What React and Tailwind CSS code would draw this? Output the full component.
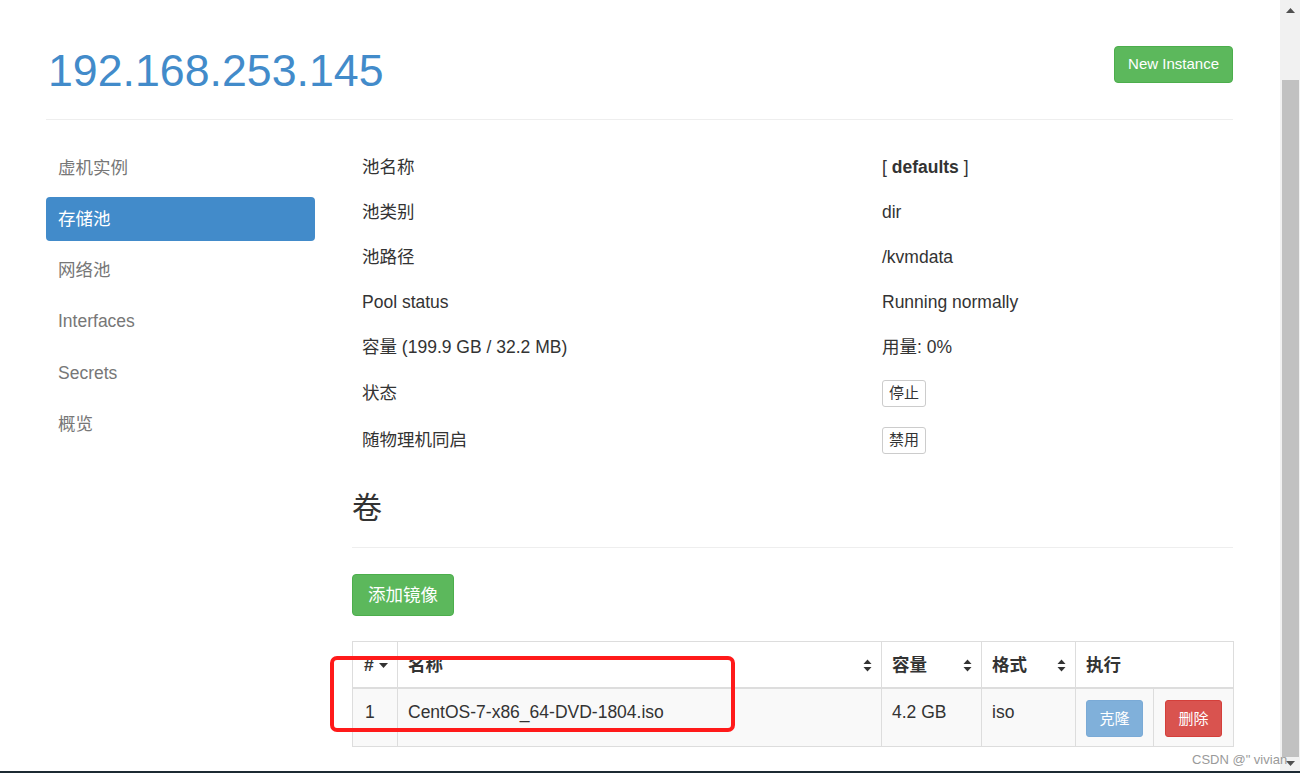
import React from 'react'

const navItems = ['虚机实例', '存储池', '网络池', 'Interfaces', 'Secrets', '概览'];

const infoRows = [
  { label: '池名称', value: <span>[ <b>defaults</b> ]</span> },
  { label: '池类别', value: 'dir' },
  { label: '池路径', value: '/kvmdata' },
  { label: 'Pool status', value: 'Running normally' },
  { label: '容量 (199.9 GB / 32.2 MB)', value: '用量: 0%' },
  { label: '状态', value: 'btn:停止', tall: true },
  { label: '随物理机同启', value: 'btn:禁用', tall: true },
];

const SortIcon = () => (
  <svg width="9" height="13" viewBox="0 0 9 13" className="shrink-0">
    <path d="M4.5 0.5 L8.5 5 L0.5 5 Z" fill="#333" />
    <path d="M0.5 8 L8.5 8 L4.5 12.5 Z" fill="#333" />
  </svg>
);

const Caret = () => (
  <svg width="9" height="5" viewBox="0 0 9 5">
    <path d="M0 0 L9 0 L4.5 5 Z" fill="#333" />
  </svg>
);

const SmallBtn = ({ children }) => (
  <span className="inline-flex items-center justify-center h-[27px] px-[6px] border border-[#ccc] rounded-[3px] bg-white text-[15px] text-[#333]">
    {children}
  </span>
);

export default function App() {
  const th = 'border-t border-l border-r border-[#ddd] border-b-2 border-b-[#ddd] px-[10px] pt-[11px] pb-[9px] text-left font-bold leading-[25px]';
  const td = 'border border-[#ddd] px-[10px] pt-[11px] pb-[9px] align-top leading-[25px] bg-[#f9f9f9]';

  return (
    <div className="relative h-[773px] w-[1300px] overflow-hidden bg-white font-['Liberation_Sans','Noto_Sans_CJK_SC',sans-serif] text-[17.5px] text-[#333]">
      <div className="flex h-[771px]">
        <div className="flex-1 pl-[46px]">
          <div className="w-[1187px]">
            {/* header */}
            <div className="flex items-start justify-between pt-[46px] pb-[23px] border-b border-[#eee]">
              <h1 className="text-[44.7px] leading-[50px] text-[#428bca] pl-[2px]">192.168.253.145</h1>
              <button className="h-[37px] px-[13px] rounded-[4px] bg-[#5cb85c] border border-[#4cae4c] text-white text-[15px]">
                New Instance
              </button>
            </div>

            <div className="flex mt-[25px]">
              {/* sidebar */}
              <div className="w-[269px] flex flex-col gap-[7.2px] pt-[1px]">
                {navItems.map((item) => (
                  <div
                    key={item}
                    className={`h-[44px] flex items-center px-[12px] rounded-[4px] ${item === '存储池' ? 'bg-[#428bca] text-white' : 'text-[#777]'}`}
                  >
                    {item}
                  </div>
                ))}
              </div>

              {/* content */}
              <div className="ml-[37px] w-[881px]">
                <div className="grid grid-cols-[520px_1fr]">
                  {infoRows.map((row) => (
                    <React.Fragment key={row.label}>
                      <div className={`${row.tall ? 'h-[47px]' : 'h-[45px]'} flex items-center px-[10px]`}>{row.label}</div>
                      <div className={`${row.tall ? 'h-[47px]' : 'h-[45px]'} flex items-center px-[10px]`}>
                        {typeof row.value === 'string' && row.value.startsWith('btn:') ? (
                          <SmallBtn>{row.value.slice(4)}</SmallBtn>
                        ) : (
                          row.value
                        )}
                      </div>
                    </React.Fragment>
                  ))}
                </div>

                <div className="mt-[27px] pb-[11px] border-b border-[#eee]">
                  <h3 className="text-[30px] leading-[33px] mb-[12px]">卷</h3>
                </div>

                <button className="mt-[26px] h-[42px] px-[15px] rounded-[4px] bg-[#5cb85c] border border-[#4cae4c] text-white text-[17.5px]">
                  添加镜像
                </button>

                <table className="mt-[25px] w-[881px] table-fixed border-collapse border border-[#ddd]">
                  <colgroup>
                    <col className="w-[45px]" />
                    <col className="w-[484px]" />
                    <col className="w-[100px]" />
                    <col className="w-[94px]" />
                    <col className="w-[78px]" />
                    <col className="w-[80px]" />
                  </colgroup>
                  <thead>
                    <tr>
                      <th className={`${th} pl-[11px] pr-[9px]`}>
                        <span className="flex items-center justify-between">#<Caret /></span>
                      </th>
                      <th className={`${th} pr-[9px]`}>
                        <span className="flex items-center justify-between">名称<SortIcon /></span>
                      </th>
                      <th className={`${th} pr-[9px]`}>
                        <span className="flex items-center justify-between">容量<SortIcon /></span>
                      </th>
                      <th className={`${th} pr-[9px]`}>
                        <span className="flex items-center justify-between">格式<SortIcon /></span>
                      </th>
                      <th className={th} colSpan={2}>执行</th>
                    </tr>
                  </thead>
                  <tbody>
                    <tr>
                      <td className={`${td} pl-[12px]`}>1</td>
                      <td className={td}>CentOS-7-x86_64-DVD-1804.iso</td>
                      <td className={td}>4.2 GB</td>
                      <td className={td}>iso</td>
                      <td className={`${td} pl-[10px] pt-[10px]`}>
                        <span className="inline-flex items-center justify-center h-[37px] w-[57px] rounded-[3px] bg-[#80b0da] border border-[#7aaad6] text-white text-[15px]">克隆</span>
                      </td>
                      <td className={`${td} pl-[11px] pt-[10px]`}>
                        <span className="inline-flex items-center justify-center h-[37px] w-[57px] rounded-[3px] bg-[#d9534f] border border-[#d43f3a] text-white text-[15px]">删除</span>
                      </td>
                    </tr>
                  </tbody>
                </table>
              </div>
            </div>
          </div>
        </div>

        {/* scrollbar */}
        <div className="w-[20px] h-full bg-[#f1f1f1] flex flex-col items-center">
          <svg width="9" height="5" viewBox="0 0 9 5" className="mt-[8px]">
            <path d="M4.5 0 L9 5 L0 5 Z" fill="#505050" />
          </svg>
          <div className="mt-[67px] w-[17px] h-[677px] bg-[#c1c1c1]" />
          <svg width="9" height="5" viewBox="0 0 9 5" className="mt-[4px]">
            <path d="M0 0 L9 0 L4.5 5 Z" fill="#505050" />
          </svg>
        </div>
      </div>
      <div className="h-[2px] bg-[#1c2a33]" />

      {/* annotation */}
      <div className="absolute left-[330px] top-[656px] w-[405px] h-[76px] border-[4px] border-[#ff1a1a] rounded-[7px]" />
      {/* watermark */}
      <div className="absolute left-[1192px] top-[750px] text-[13px] text-[#9a9a9a] whitespace-nowrap">CSDN @" vivian</div>
    </div>
  )
}
